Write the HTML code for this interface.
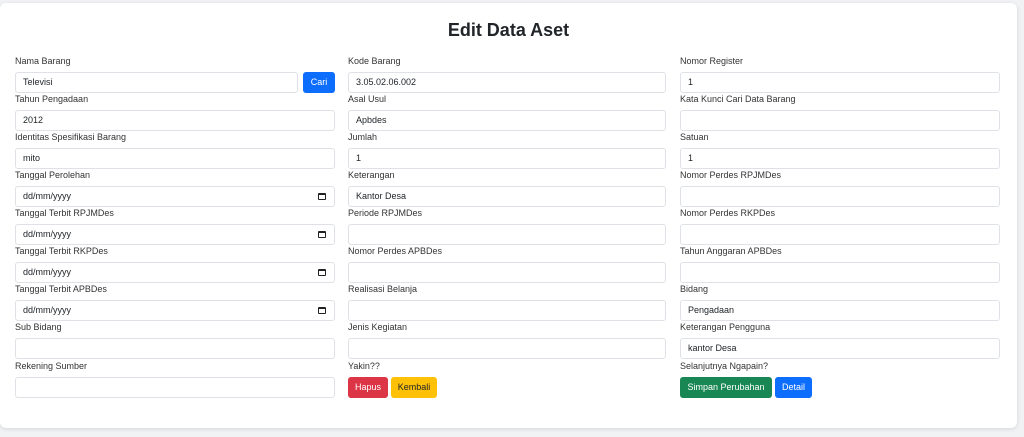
<!DOCTYPE html>
<html><head><meta charset="utf-8"><style>
*{box-sizing:border-box;margin:0;padding:0}
body{width:1024px;height:437px;background:#f1f2f4;font-family:"Liberation Sans",sans-serif;position:relative;overflow:hidden;color:#212529}
.card{position:absolute;left:0;top:3px;width:1017px;height:425px;background:#fff;border-radius:6px;box-shadow:0 1px 4px rgba(0,0,0,.12)}
h1{position:absolute;top:20px;left:0;width:1017px;text-align:center;font-size:18px;font-weight:bold;color:#212529}
.l{position:absolute;font-size:9px;line-height:11px;color:#333}
.i{position:absolute;height:21px;border:1px solid #dee2e6;border-radius:3px;font-size:9px;line-height:19px;padding-left:7px;color:#212529;background:#fff}
.cal{position:absolute;right:8px;top:6px;width:8px;height:7px;border:1px solid #222;border-top-width:2px;border-radius:1px}
.b{position:absolute;height:21px;border-radius:3px;font-size:9px;line-height:21px;text-align:center;color:#fff}
</style></head><body>
<div class="card"></div>
<h1>Edit Data Aset</h1>
<script></script>
<div id="f"></div>
<!-- column 1 -->
<div class="l" style="left:15px;top:56px">Nama Barang</div>
<div class="i" style="left:15px;top:72px;width:283px">Televisi</div>
<div class="b" style="left:303px;top:72px;width:32px;background:#0d6efd">Cari</div>
<div class="l" style="left:15px;top:94px">Tahun Pengadaan</div>
<div class="i" style="left:15px;top:110px;width:320px">2012</div>
<div class="l" style="left:15px;top:132px">Identitas Spesifikasi Barang</div>
<div class="i" style="left:15px;top:148px;width:320px">mito</div>
<div class="l" style="left:15px;top:170px">Tanggal Perolehan</div>
<div class="i" style="left:15px;top:186px;width:320px">dd/mm/yyyy<span class="cal"></span></div>
<div class="l" style="left:15px;top:208px">Tanggal Terbit RPJMDes</div>
<div class="i" style="left:15px;top:224px;width:320px">dd/mm/yyyy<span class="cal"></span></div>
<div class="l" style="left:15px;top:246px">Tanggal Terbit RKPDes</div>
<div class="i" style="left:15px;top:262px;width:320px">dd/mm/yyyy<span class="cal"></span></div>
<div class="l" style="left:15px;top:284px">Tanggal Terbit APBDes</div>
<div class="i" style="left:15px;top:300px;width:320px">dd/mm/yyyy<span class="cal"></span></div>
<div class="l" style="left:15px;top:322px">Sub Bidang</div>
<div class="i" style="left:15px;top:338px;width:320px"></div>
<div class="l" style="left:15px;top:361px">Rekening Sumber</div>
<div class="i" style="left:15px;top:377px;width:320px"></div>
<!-- column 2 -->
<div class="l" style="left:348px;top:56px">Kode Barang</div>
<div class="i" style="left:348px;top:72px;width:318px">3.05.02.06.002</div>
<div class="l" style="left:348px;top:94px">Asal Usul</div>
<div class="i" style="left:348px;top:110px;width:318px">Apbdes</div>
<div class="l" style="left:348px;top:132px">Jumlah</div>
<div class="i" style="left:348px;top:148px;width:318px">1</div>
<div class="l" style="left:348px;top:170px">Keterangan</div>
<div class="i" style="left:348px;top:186px;width:318px">Kantor Desa</div>
<div class="l" style="left:348px;top:208px">Periode RPJMDes</div>
<div class="i" style="left:348px;top:224px;width:318px"></div>
<div class="l" style="left:348px;top:246px">Nomor Perdes APBDes</div>
<div class="i" style="left:348px;top:262px;width:318px"></div>
<div class="l" style="left:348px;top:284px">Realisasi Belanja</div>
<div class="i" style="left:348px;top:300px;width:318px"></div>
<div class="l" style="left:348px;top:322px">Jenis Kegiatan</div>
<div class="i" style="left:348px;top:338px;width:318px"></div>
<div class="l" style="left:348px;top:361px">Yakin??</div>
<div class="b" style="left:348px;top:377px;width:40px;background:#dc3545">Hapus</div>
<div class="b" style="left:391px;top:377px;width:46px;background:#ffc107;color:#212529">Kembali</div>
<!-- column 3 -->
<div class="l" style="left:680px;top:56px">Nomor Register</div>
<div class="i" style="left:680px;top:72px;width:320px">1</div>
<div class="l" style="left:680px;top:94px">Kata Kunci Cari Data Barang</div>
<div class="i" style="left:680px;top:110px;width:320px"></div>
<div class="l" style="left:680px;top:132px">Satuan</div>
<div class="i" style="left:680px;top:148px;width:320px">1</div>
<div class="l" style="left:680px;top:170px">Nomor Perdes RPJMDes</div>
<div class="i" style="left:680px;top:186px;width:320px"></div>
<div class="l" style="left:680px;top:208px">Nomor Perdes RKPDes</div>
<div class="i" style="left:680px;top:224px;width:320px"></div>
<div class="l" style="left:680px;top:246px">Tahun Anggaran APBDes</div>
<div class="i" style="left:680px;top:262px;width:320px"></div>
<div class="l" style="left:680px;top:284px">Bidang</div>
<div class="i" style="left:680px;top:300px;width:320px">Pengadaan</div>
<div class="l" style="left:680px;top:322px">Keterangan Pengguna</div>
<div class="i" style="left:680px;top:338px;width:320px">kantor Desa</div>
<div class="l" style="left:680px;top:361px">Selanjutnya Ngapain?</div>
<div class="b" style="left:680px;top:377px;width:92px;background:#198754">Simpan Perubahan</div>
<div class="b" style="left:775px;top:377px;width:37px;background:#0d6efd">Detail</div>
</body></html>
